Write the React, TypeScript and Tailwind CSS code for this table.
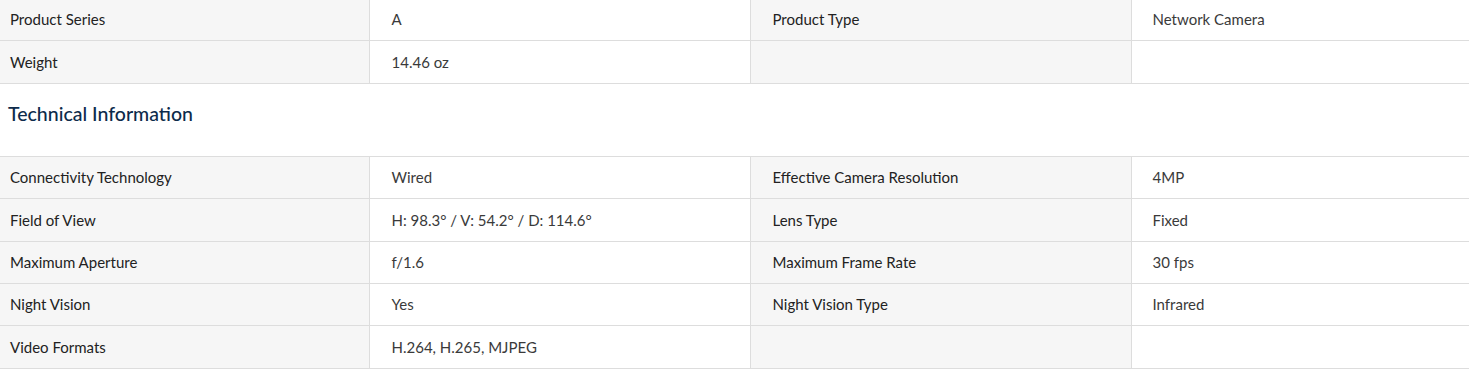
const general: [string, string, string, string][] = [
  ["Product Series", "A", "Product Type", "Network Camera"],
  ["Weight", "14.46 oz", "", ""],
];

const technical: [string, string, string, string][] = [
  ["Connectivity Technology", "Wired", "Effective Camera Resolution", "4MP"],
  ["Field of View", "H: 98.3° / V: 54.2° / D: 114.6°", "Lens Type", "Fixed"],
  ["Maximum Aperture", "f/1.6", "Maximum Frame Rate", "30 fps"],
  ["Night Vision", "Yes", "Night Vision Type", "Infrared"],
  ["Video Formats", "H.264, H.265, MJPEG", "", ""],
];

function SpecTable({ rows }: { rows: [string, string, string, string][] }) {
  return (
    <table className="w-full table-fixed border-collapse text-[15px]">
      <colgroup>
        <col className="w-[369px]" />
        <col className="w-[381px]" />
        <col className="w-[381px]" />
        <col />
      </colgroup>
      <tbody>
        {rows.map((r) => (
          <tr key={r[0]} className="h-[42.4px]">
            <td className="border border-l-0 border-[#dddddd] bg-[#f6f6f6] pl-[10px] text-[#222222]">{r[0]}</td>
            <td className="border border-[#dddddd] bg-white pl-[22px] text-[#3a3a3a]">{r[1]}</td>
            <td className="border border-[#dddddd] bg-[#f6f6f6] pl-[22px] text-[#222222]">{r[2]}</td>
            <td className="border border-r-0 border-[#dddddd] bg-white pl-[21px] text-[#3a3a3a]">{r[3]}</td>
          </tr>
        ))}
      </tbody>
    </table>
  );
}

export default function App() {
  return (
    <div className="w-[1469px] h-[382px] overflow-hidden bg-white font-['Lato','Noto_Sans',sans-serif]">
      <div className="-mt-[2px]">
        <SpecTable rows={general} />
      </div>
      <h3 className="h-[72px] pl-[8px] pt-[17px] text-[19.5px] font-medium leading-[26px] text-[#0d2b4b]">
        Technical Information
      </h3>
      <SpecTable rows={technical} />
    </div>
  );
}
